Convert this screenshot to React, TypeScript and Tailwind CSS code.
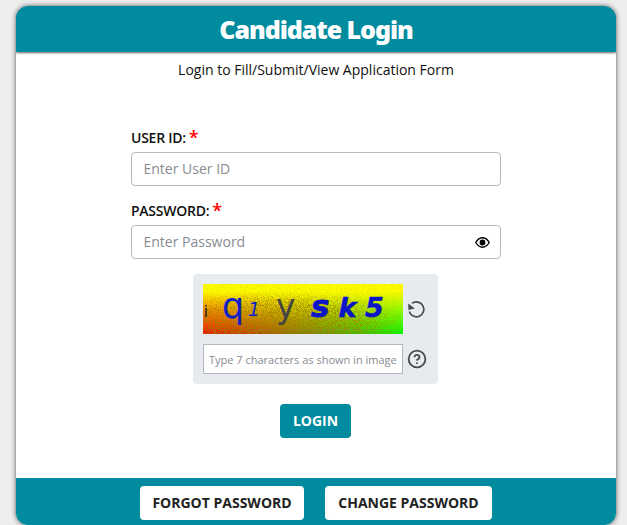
import { HelpCircle } from 'lucide-react'

const Captcha = () => (
  <svg width="200" height="50" viewBox="0 0 200 50" className="block shrink-0">
    <defs>
      <linearGradient id="sweep" x1="0" y1="0" x2="1" y2="0">
        <stop offset="0" stopColor="#ff0000" />
        <stop offset="1" stopColor="#00ff00" />
      </linearGradient>
      <linearGradient id="fade" x1="0" y1="0" x2="0" y2="1">
        <stop offset="0" stopColor="#ffff00" />
        <stop offset="0.15" stopColor="#ffff00" />
        <stop offset="1" stopColor="#ffff00" stopOpacity="0" />
      </linearGradient>
      <filter id="grain" x="0" y="0" width="100%" height="100%">
        <feTurbulence type="fractalNoise" baseFrequency="1.1" numOctaves="2" seed="4" />
        <feColorMatrix values="0 0 0 0 0.35  0 0 0 0 0.22  0 0 0 0 0  5 0 0 0 -2.1" />
      </filter>
      <radialGradient id="maskFade" cx="0.38" cy="0.8" r="0.65">
        <stop offset="0" stopColor="#fff" />
        <stop offset="0.6" stopColor="#ccc" />
        <stop offset="1" stopColor="#222" />
      </radialGradient>
      <mask id="grainMask">
        <rect width="200" height="50" fill="url(#maskFade)" />
      </mask>
    </defs>
    <rect width="200" height="50" fill="url(#sweep)" />
    <rect width="200" height="50" fill="url(#fade)" />
    <rect width="200" height="50" filter="url(#grain)" mask="url(#grainMask)" />
    <text x="1" y="33" fontFamily="Liberation Sans, sans-serif" fontSize="17" fill="#222">i</text>
    <text x="19" y="34" fontFamily="DejaVu Sans, sans-serif" fontSize="35" fill="#1020c8">q</text>
    <text x="45" y="32" fontFamily="DejaVu Sans, sans-serif" fontStyle="italic" fontSize="19" fill="#1020c8">1</text>
    <text x="73" y="34" fontFamily="DejaVu Sans, sans-serif" fontSize="33" fill="#444">y</text>
    <text x="108" y="33" fontFamily="DejaVu Sans, sans-serif" fontWeight="700" fontStyle="italic" fontSize="31" fill="#0c14c8" stroke="#0c14c8" strokeWidth="0.8">s</text>
    <text x="135.5" y="33" fontFamily="DejaVu Sans, sans-serif" fontWeight="700" fontStyle="italic" fontSize="27" fill="#0c14c8" stroke="#0c14c8" strokeWidth="0.5">k</text>
    <text x="162" y="33" fontFamily="DejaVu Sans, sans-serif" fontWeight="700" fontStyle="italic" fontSize="27" fill="#0c14c8" stroke="#0c14c8" strokeWidth="0.5">5</text>
  </svg>
)

const Label = ({ children }: { children: string }) => (
  <label className="flex h-[21px] items-start text-sm font-semibold leading-[19px] tracking-[-0.25px] text-[#111]">
    {children}
    <span className="ml-[3px] -mt-px text-lg leading-[21px] text-[#ff0000]">*</span>
  </label>
)

const App = () => {
  return (
    <div className="h-[525px] overflow-hidden bg-[#eeeeee] pl-4 pr-[11px] pt-1.5 font-['Open_Sans',sans-serif]">
      <div className="flex h-[519px] flex-col overflow-hidden rounded-xl bg-white shadow-[0_0_5px_rgba(0,0,0,0.65)]">
        {/* header */}
        <div className="h-[46px] shrink-0 bg-[#008c9e] text-center shadow-[0_1px_2px_rgba(0,0,0,0.6)]">
          <h1 className="font-['Noto_Sans',sans-serif] text-[25px] font-black leading-[46px] tracking-[-1.05px] text-white">
            Candidate Login
          </h1>
        </div>
        <p className="mt-2 text-center text-sm leading-[20px] text-[#111]">
          Login to Fill/Submit/View Application Form
        </p>

        {/* form */}
        <div className="mx-auto mt-[48px] w-[370px]">
          <Label>USER ID:</Label>
          <input
            placeholder="Enter User ID"
            className="mt-[3px] block h-[34px] w-full rounded border border-[#bbbbbb] pb-px pl-[11.5px] pr-3 text-sm outline-none placeholder:text-[#888c92]"
          />
          <div className="mt-[15px]">
            <Label>PASSWORD:</Label>
          </div>
          <div className="mt-[3px] flex h-[34px] items-center rounded border border-[#bbbbbb] pl-[11.5px] pr-[10px]">
            <input
              placeholder="Enter Password"
              className="min-w-0 flex-1 text-sm outline-none placeholder:text-[#888c92]"
            />
            <svg width="15" height="11" viewBox="0 0 15 11" fill="none">
              <path d="M0.8 5.5 C3 1.8 5.2 0.8 7.5 0.8 C9.8 0.8 12 1.8 14.2 5.5 C12 9.2 9.8 10.2 7.5 10.2 C5.2 10.2 3 9.2 0.8 5.5 Z" stroke="#000" strokeWidth="1.4" />
              <circle cx="7.5" cy="5.5" r="2.9" fill="#000" />
            </svg>
          </div>
        </div>

        {/* captcha */}
        <div className="ml-[177px] mt-[15px] h-[110px] w-[245px] rounded-sm bg-[#e7ebef] pl-2.5 pt-2.5">
          <div className="flex items-center gap-[4px]">
            <Captcha />
            <svg width="19" height="19" viewBox="0 0 19 19" fill="none" className="text-[#4a4a4a]">
              <path d="M5 3.4 A7.4 7.4 0 1 1 2.3 11.5" stroke="currentColor" strokeWidth="1.7" />
              <path d="M1.2 3.6 L1.4 10 L7.8 8.6 Z" fill="currentColor" />
            </svg>
          </div>
          <div className="mt-2.5 flex items-center gap-[4px]">
            <input
              placeholder="Type 7 characters as shown in image"
              className="block h-[30px] w-[200px] border border-[#b4b8bc] bg-white px-[5px] text-[11px] outline-none placeholder:text-[#888c92]"
            />
            <HelpCircle size={20} strokeWidth={2.2} className="text-[#4a4a4a]" />
          </div>
        </div>

        <button className="ml-[264px] mt-5 block h-[34px] w-[71px] rounded bg-[#008c9e] text-sm font-bold text-white">
          LOGIN
        </button>

        {/* footer */}
        <div className="mt-auto flex h-[47px] shrink-0 justify-center gap-[21px] bg-[#008c9e] pt-2">
          <button className="h-[34px] w-[164px] rounded-sm bg-white text-sm font-bold text-[#222]">
            FORGOT PASSWORD
          </button>
          <button className="h-[34px] w-[167px] rounded-sm bg-white text-sm font-bold text-[#222]">
            CHANGE PASSWORD
          </button>
        </div>
      </div>
    </div>
  )
}

export default App
